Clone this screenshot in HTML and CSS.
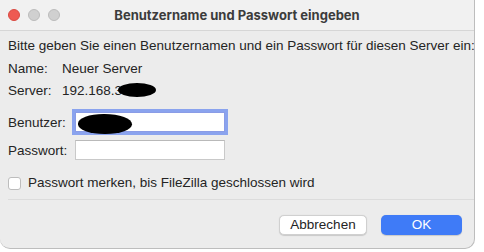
FILE: index.html
```html
<!DOCTYPE html>
<html lang="de">
<head>
<meta charset="utf-8">
<link rel="stylesheet" href="styles.css">
</head>
<body>
<div class="desk">
  <div class="window">
    <div class="titlebar">
      <div class="lights">
        <span class="light red"></span>
        <span class="light gray"></span>
        <span class="light gray"></span>
      </div>
      <div class="title">Benutzername und Passwort eingeben</div>
    </div>
    <div class="content">
      <p class="intro">Bitte geben Sie einen Benutzernamen und ein Passwort für diesen Server ein:</p>
      <div class="info">
        <span class="lbl">Name:</span><span>Neuer Server</span>
        <span class="lbl">Server:</span><span class="server">192.168.3<span class="blob blob-server"></span></span>
      </div>
      <div class="form">
        <label class="flbl">Benutzer:</label>
        <div class="input focus"><span class="blob blob-user"></span></div>
        <label class="flbl">Passwort:</label>
        <div class="input"></div>
      </div>
      <label class="check"><span class="box"></span>Passwort merken, bis FileZilla geschlossen wird</label>
      <div class="sep"></div>
      <div class="buttons">
        <button class="btn">Abbrechen</button>
        <button class="btn primary">OK</button>
      </div>
    </div>
  </div>
</div>
</body>
</html>
```
FILE: styles.css
```css
html, body { margin: 0; padding: 0; }
body {
  width: 484px; height: 252px; overflow: hidden;
  background: #ffffff;
  font-family: "Liberation Sans", Arial, sans-serif;
  font-size: 13.5px; color: #242424;
}
.desk { padding: 0; }
.window {
  width: 475px; height: 249px;
  background: #ececec;
  border-right: 1px solid #bdbdbd;
  border-bottom: 1px solid #bdbdbd;
  border-radius: 0 0 10px 10px;
  box-sizing: border-box;
  display: flex; flex-direction: column;
  overflow: hidden;
}
.titlebar {
  height: 31px; flex: none;
  background: #f1f1f1;
  border-bottom: 1px solid #d6d6d6;
  box-sizing: border-box;
  display: flex; align-items: center;
  position: relative;
}
.lights { display: flex; gap: 8px; padding-left: 8px; }
.light { width: 12px; height: 12px; border-radius: 50%; box-sizing: border-box; }
.light.red { background: #ee5a52; border: 0.5px solid #d94a42; }
.light.gray { background: #d0d0d0; border: 0.5px solid #bcbcbc; }
.title {
  position: absolute; left: 0; right: 0; top: 0; bottom: 0;
  display: flex; align-items: center; justify-content: center;
  font-family: Inter, "Liberation Sans", sans-serif;
  font-weight: 700; font-size: 13px; color: #3c3c3c;
}
.content { padding: 7px 0 0 8px; display: flex; flex-direction: column; }
.intro { margin: 0; line-height: 16px; white-space: nowrap; }
.info {
  display: grid; grid-template-columns: 54px auto; row-gap: 6px;
  margin-top: 7px; line-height: 16px;
}
.server { position: relative; }
.blob { display: inline-block; background: #000; }
.blob-server {
  width: 38px; height: 14px; border-radius: 50%;
  vertical-align: -2px; margin-left: -4px;
}
.form {
  display: grid; grid-template-columns: 67px 150px; row-gap: 8px;
  align-items: center; margin-top: 13px;
}
.input {
  height: 20px; background: #fff; box-sizing: border-box;
  border: 1px solid #c9c9c9; border-top-color: #b9b9b9;
  position: relative;
}
.input.focus { box-shadow: 0 0 0 3px #8aa3ee; border-color: #8a9ce6; }
.blob-user {
  position: absolute; left: 2px; top: 1px;
  width: 54px; height: 20px; border-radius: 48% 52% 50% 50%;
}
.check {
  display: flex; align-items: center; gap: 7px;
  margin-top: 15px; line-height: 16px;
}
.box {
  width: 13px; height: 13px; box-sizing: border-box;
  background: #fff; border: 1px solid #bdbdbd; border-radius: 3px;
}
.sep { height: 1px; background: #dcdcdc; margin-top: 8px; }
.buttons {
  display: flex; justify-content: flex-end; gap: 14px;
  margin-top: 15px; padding-right: 12px;
}
.btn {
  font: inherit; font-size: 13.5px; height: 20px; line-height: 18px;
  border-radius: 5px; padding: 0; cursor: default;
  box-sizing: border-box;
}
.btn:not(.primary) {
  width: 88px; background: #fff; color: #242424;
  border: 0.5px solid #d0d0d0; box-shadow: 0 0.5px 1px rgba(0,0,0,0.15);
}
.btn.primary {
  width: 81px; background: #3f7bf7; color: #fff; border: none;
  box-shadow: 0 0.5px 1px rgba(0,0,0,0.15);
}
```
